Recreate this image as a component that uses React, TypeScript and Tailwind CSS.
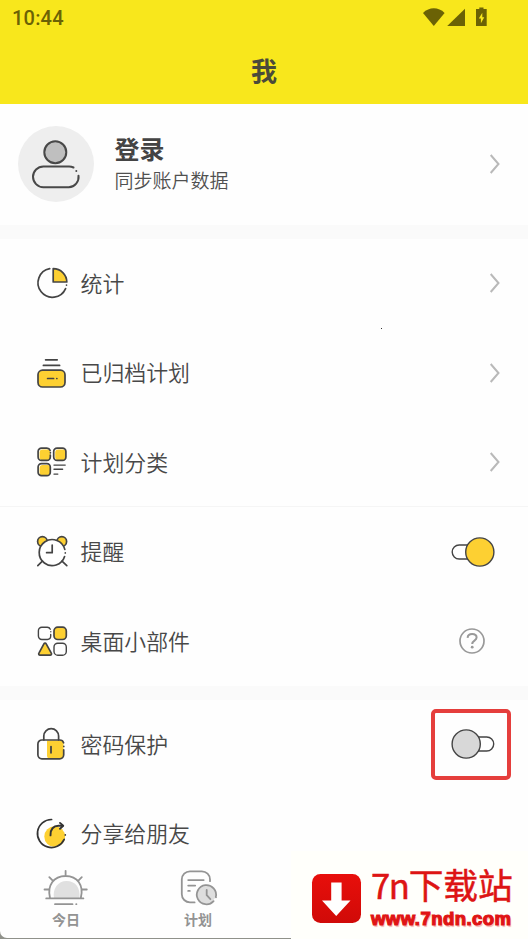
import type { ReactNode } from "react";

const CJK = "font-['Noto_Sans_CJK_SC',sans-serif]";

function Glyph({ children }: { children: ReactNode }) {
  return (
    <svg
      className="size-9 shrink-0"
      viewBox="0 0 36 36"
      fill="none"
      stroke="#444444"
      strokeWidth="1.7"
      strokeLinecap="round"
      strokeLinejoin="round"
    >
      {children}
    </svg>
  );
}

function StatsIcon() {
  return (
    <Glyph>
      <path d="M15.7 3.7A14.4 14.4 0 1 0 31.6 23.6" />
      <path d="M19.2 3.6V17h13.6A13.6 13.4 0 0 0 19.2 3.6Z" fill="#fdd032" />
      <path d="M32.5 20v.1" />
    </Glyph>
  );
}

function ArchiveIcon() {
  return (
    <Glyph>
      <path d="M11.6 4.8h11.6M9.4 10.4h16.2" />
      <rect x="4" y="15.2" width="27" height="16.8" rx="4.5" fill="#fdd032" />
      <path d="M13.6 23.5h6M22.8 23.5h.1" />
    </Glyph>
  );
}

function CategoryIcon() {
  return (
    <Glyph>
      <g fill="#fdd032" stroke="none">
        <rect x="5.6" y="5.6" width="10.7" height="10.7" rx="3" />
        <rect x="21.2" y="5.6" width="10.7" height="10.7" rx="3" />
        <rect x="5.6" y="21" width="10.7" height="10.7" rx="3" />
      </g>
      <path d="M16.3 11v1.9a3.4 3.4 0 0 1-3.4 3.4H7.5a3.4 3.4 0 0 1-3.4-3.4V7.6a3.4 3.4 0 0 1 3.4-3.4h5.4a3.4 3.4 0 0 1 3.2 2.2M16.4 8.7v.1" />
      <rect x="19.7" y="4.2" width="12.2" height="12.1" rx="3.4" />
      <rect x="4.1" y="19.6" width="12.2" height="12.1" rx="3.4" />
      <path d="M20 21.1h11.2M20 25.3h8.6M20 30.1h3.8" strokeWidth="1.4" />
    </Glyph>
  );
}

function AlarmIcon() {
  return (
    <Glyph>
      <circle cx="8.4" cy="7.4" r="4.8" fill="#fdd032" />
      <circle cx="27.8" cy="7.4" r="4.8" fill="#fdd032" />
      <circle cx="18.2" cy="18.6" r="13" fill="#ffffff" stroke="none" />
      <path d="M30.6 22.5A13 13 0 1 1 30.8 15.4M31.3 18.9v.1" />
      <path d="M18.2 11v7.7h-5.6M8.4 27.2l-4.6 4.5M28 27.2l4.8 4.5" />
    </Glyph>
  );
}

function WidgetsIcon() {
  return (
    <Glyph>
      <path d="M16.7 11.4v1.7a3.4 3.4 0 0 1-3.4 3.4H7.8a3.4 3.4 0 0 1-3.4-3.4V7.7a3.4 3.4 0 0 1 3.4-3.4h5.5a3.4 3.4 0 0 1 3 1.9M16.8 8.7v.1" strokeWidth="1.4" />
      <rect x="20" y="4.2" width="12.3" height="12.3" rx="3.8" fill="#fdd032" />
      <path d="M9.9 20.9 4.9 30.2a1.3 1.3 0 0 0 1.1 2h10.2a1.3 1.3 0 0 0 1.1-2L12.2 20.9a1.3 1.3 0 0 0-2.3 0Z" fill="#fdd032" />
      <rect x="20" y="20.2" width="12.3" height="12" rx="3.8" strokeWidth="1.4" />
    </Glyph>
  );
}

function LockIcon() {
  return (
    <Glyph>
      <path d="M13 14.4h16.5v15.5a2.7 2.7 0 0 1-2.7 2.7H15.3A2.6 2.6 0 0 1 13 30Z" fill="#fdd032" stroke="none" />
      <path d="M29.7 23.8v5a4 4 0 0 1-4 4H7.9a4 4 0 0 1-4-4V18a4 4 0 0 1 4-4h17.8a4 4 0 0 1 3.9 2.8M29.8 20.4v.1" />
      <path d="M9.8 14v-3.9a7.4 7.4 0 0 1 14.8 0V14" />
      <path d="M17 20.6v6.2" strokeWidth="1.8" />
    </Glyph>
  );
}

function ShareIcon() {
  return (
    <Glyph>
      <circle cx="20.7" cy="20.7" r="10.4" fill="#fdd032" stroke="none" />
      <path d="M17.6 3.5A14 14 0 1 0 30.2 23.3M31.3 18.9v.1" stroke="#333333" />
      <path d="M16.5 19.4c0-6 2.6-9.6 8-9.6h4.2" stroke="#333333" strokeWidth="1.9" />
      <path d="m26 6.9 3.2 2.9-3.2 3" stroke="#333333" strokeWidth="1.9" />
    </Glyph>
  );
}

function Chevron() {
  return (
    <svg className="h-5 w-3" viewBox="0 0 12 20" fill="none" stroke="#b9b9b9" strokeWidth="2">
      <path d="M1.7 1 9.5 10 1.7 19" />
    </svg>
  );
}

function Toggle({ on }: { on: boolean }) {
  return (
    <svg className="h-8 w-11" viewBox="0 0 44 32" stroke="#444444" strokeWidth="1.4">
      {on ? (
        <>
          <rect x="1.2" y="9" width="30" height="14" rx="7" fill="#ffffff" />
          <circle cx="28.8" cy="16" r="14.1" fill="#fdd032" />
        </>
      ) : (
        <>
          <rect x="12.7" y="9" width="30" height="14" rx="7" fill="#ffffff" />
          <circle cx="15.2" cy="16" r="14.1" fill="#d8d8d8" />
        </>
      )}
    </svg>
  );
}

function HelpIcon() {
  return (
    <svg className="size-7" viewBox="0 0 28 28" fill="none" stroke="#999999" strokeWidth="1.7">
      <circle cx="14" cy="14" r="12" />
      <path d="M9.6 10.8c.2-2.4 2-3.7 4.5-3.7 2.6 0 4.5 1.3 4.5 3.5 0 3.1-4.4 3-4.4 6.4" strokeWidth="2" />
      <circle cx="14.2" cy="20.2" r="1.4" fill="#999999" stroke="none" />
    </svg>
  );
}

function Row({ icon, label, children }: { icon: ReactNode; label: string; children?: ReactNode }) {
  return (
    <div className="flex h-[89.5px] shrink-0 items-center pl-[34px]">
      {icon}
      <span className="ml-[10.5px] flex-1 pb-[1.5px] text-[21.9px] font-[350] leading-8 text-[#484848]">{label}</span>
      {children}
    </div>
  );
}

function StatusBar() {
  return (
    <div className="flex h-9 items-center justify-between pl-3 pr-10 text-[#6b6205]">
      <span className="font-[Roboto,sans-serif] text-[20px] font-medium leading-6 tracking-[0.2px]">10:44</span>
      <svg className="h-6 w-[66px]" viewBox="0 0 66 24" fill="currentColor">
        <path d="M1 7C7.2.8 16.4.8 22.6 7L11.8 20Z" />
        <path d="M43 2.8V20H25.2Z" />
        <path
          fillRule="evenodd"
          d="M57.3 1.4h4.2v1.7h3.2V20H54V3.1h3.3ZM60.3 6.8 56.8 12.6h2.1v4.6l3.4-5.9h-2Z"
        />
      </svg>
    </div>
  );
}

function TodayTab() {
  return (
    <div className="flex w-[132px] flex-col items-center">
      <svg className="h-10 w-12" viewBox="0 0 48 40" fill="none" stroke="#949494" strokeWidth="1.8" strokeLinecap="round">
        <path d="M12 30.3c-1.8-9.4 4-17.2 12.6-17.2s14 6.3 12.8 17.2Z" fill="#e0e0e0" stroke="none" />
        <path d="M4.2 30.4h37.2M8 30c-3.2-12.4 3.8-22 15.6-22s18.6 9.6 15.2 22M23.6 7.4V2.8M2.5 21.5h4.2M40.6 21.5h4.2M7.3 9.1l3.2 3.2M39.8 9.1l-3.2 3.2M13 36.2h17.5M34.2 36.2h.2" />
      </svg>
      <span className="text-[14px] font-bold leading-[22px] text-[#939393]">今日</span>
    </div>
  );
}

function PlanTab() {
  return (
    <div className="flex w-[132px] flex-col items-center">
      <svg className="h-10 w-10" viewBox="0 0 40 40" fill="none" stroke="#949494" strokeWidth="1.8" strokeLinecap="round">
        <path d="M16.6 34.4H12a8.2 8.2 0 0 1-8.2-8.2V11.5A8.2 8.2 0 0 1 12 3.3h11.8a8.2 8.2 0 0 1 8.2 8.2v1.7" />
        <path d="M10.2 12.1h15.5M10.2 17.6h7M10.2 22.9h1.6" />
        <circle cx="28.5" cy="26.8" r="9" fill="#dedede" stroke="none" />
        <path d="M35.6 33.1a9.6 9.6 0 1 1 2.2-4.2M38 29.2v.1" />
        <path d="M28.7 22v5.2l3.7 4" />
      </svg>
      <span className="text-[14px] font-bold leading-[22px] text-[#939393]">计划</span>
    </div>
  );
}

function Watermark() {
  return (
    <div className="absolute bottom-0 right-0 flex h-[88px] w-[237px] items-start bg-[#fffffb] pl-5 pt-[22px]">
      <svg className="h-[51px] w-[51px] shrink-0" viewBox="0 0 51 51">
        <defs>
          <linearGradient id="badge" x1="0" y1="0" x2="0" y2="1">
            <stop offset="0" stopColor="#e80f0b" />
            <stop offset="1" stopColor="#d00a08" />
          </linearGradient>
        </defs>
        <rect x="1" y="1" width="49" height="49" rx="8.5" fill="url(#badge)" />
        <path d="M20.2 9.5h10.4v18H39.5L25.2 43 11 27.5h9.2Z" fill="#ffffff" />
      </svg>
      <div className="ml-[9px] -mt-[12px] flex flex-col whitespace-nowrap">
        <span className="h-[46px] text-[34.7px] leading-[46px] text-[#dd1414] [-webkit-text-stroke:0.5px_#dd1414]">
          <span className="tracking-[-1.4px]">7n</span>下载站
        </span>
        <span className="mt-[2px] h-5 font-['Liberation_Sans',sans-serif] text-[18.5px] font-bold leading-5 tracking-[0.45px] text-[#e01414] [-webkit-text-stroke:1.2px_#e01414] [text-shadow:1px_2px_1px_#f5b5b0]">
          www.7ndn.com
        </span>
      </div>
    </div>
  );
}

export default function App() {
  return (
    <div className={`relative flex h-[939px] w-[528px] flex-col overflow-hidden bg-[#fefefe] ${CJK}`}>
      <header className="h-[104px] shrink-0 bg-[#f8e71c]">
        <StatusBar />
        <h1 className="text-center text-[26px] font-bold leading-[67px] text-[#4a4a3a]">我</h1>
      </header>

      <section className="flex h-[121px] shrink-0 items-center pb-[2px] pl-[18px] pr-[27px]">
        <svg className="size-[76px]" viewBox="0 0 76 76" fill="none" stroke="#484848" strokeWidth="2">
          <circle cx="38" cy="38" r="38" fill="#eeeeee" stroke="none" />
          <circle cx="37.3" cy="26.3" r="11" fill="#bfbfbf" />
          <path
            strokeLinecap="round"
            d="M55.5 41.5a10 10 0 0 0-4.4-1.1H25.4a10.4 10.4 0 0 0 0 20.8h25.4a10.2 10.2 0 0 0 9.7-11.5M58.3 44.9v.1"
          />
        </svg>
        <div className="ml-[20.5px] flex flex-1 flex-col text-[#444444]">
          <span className="text-[25px] font-bold leading-[31px]">登录</span>
          <span className="text-[19px] font-[350] leading-[31px] text-[#505050]">同步账户数据</span>
        </div>
        <Chevron />
      </section>

      <div className="h-[13.5px] shrink-0 bg-[#fafafa]" />

      <section className="shrink-0 pr-[27px]">
        <Row icon={<StatsIcon />} label="统计"><Chevron /></Row>
        <Row icon={<ArchiveIcon />} label="已归档计划"><Chevron /></Row>
        <Row icon={<CategoryIcon />} label="计划分类"><Chevron /></Row>
      </section>
      <div className="absolute left-[381px] top-[328px] size-px bg-[#333333]" />

      <section className="-mt-px h-[180px] shrink-0 border-t border-[#f5f5f5]">
        <Row icon={<AlarmIcon />} label="提醒">
          <div className="pr-[33px]"><Toggle on /></div>
        </Row>
        <Row icon={<WidgetsIcon />} label="桌面小部件">
          <div className="pr-[42px]"><HelpIcon /></div>
        </Row>
      </section>

      <div className="h-[14px] shrink-0 bg-[#fafafa]" />

      <section className="-mt-[0.5px] h-[166.5px] shrink-0 overflow-hidden">
        <Row icon={<LockIcon />} label="密码保护">
          <div className="mr-[17px] flex h-[71px] w-20 items-center justify-center rounded-[5px] border-4 border-[#e53e3c] pl-1">
            <Toggle on={false} />
          </div>
        </Row>
        <Row icon={<ShareIcon />} label="分享给朋友" />
      </section>

      <div className="h-[73px] shrink-0 bg-[#8f918a]">
        <nav className="flex h-[72px] rounded-bl-[7px] bg-[#fefefe] pt-[2px]">
          <TodayTab />
          <PlanTab />
        </nav>
      </div>

      <Watermark />
    </div>
  );
}
